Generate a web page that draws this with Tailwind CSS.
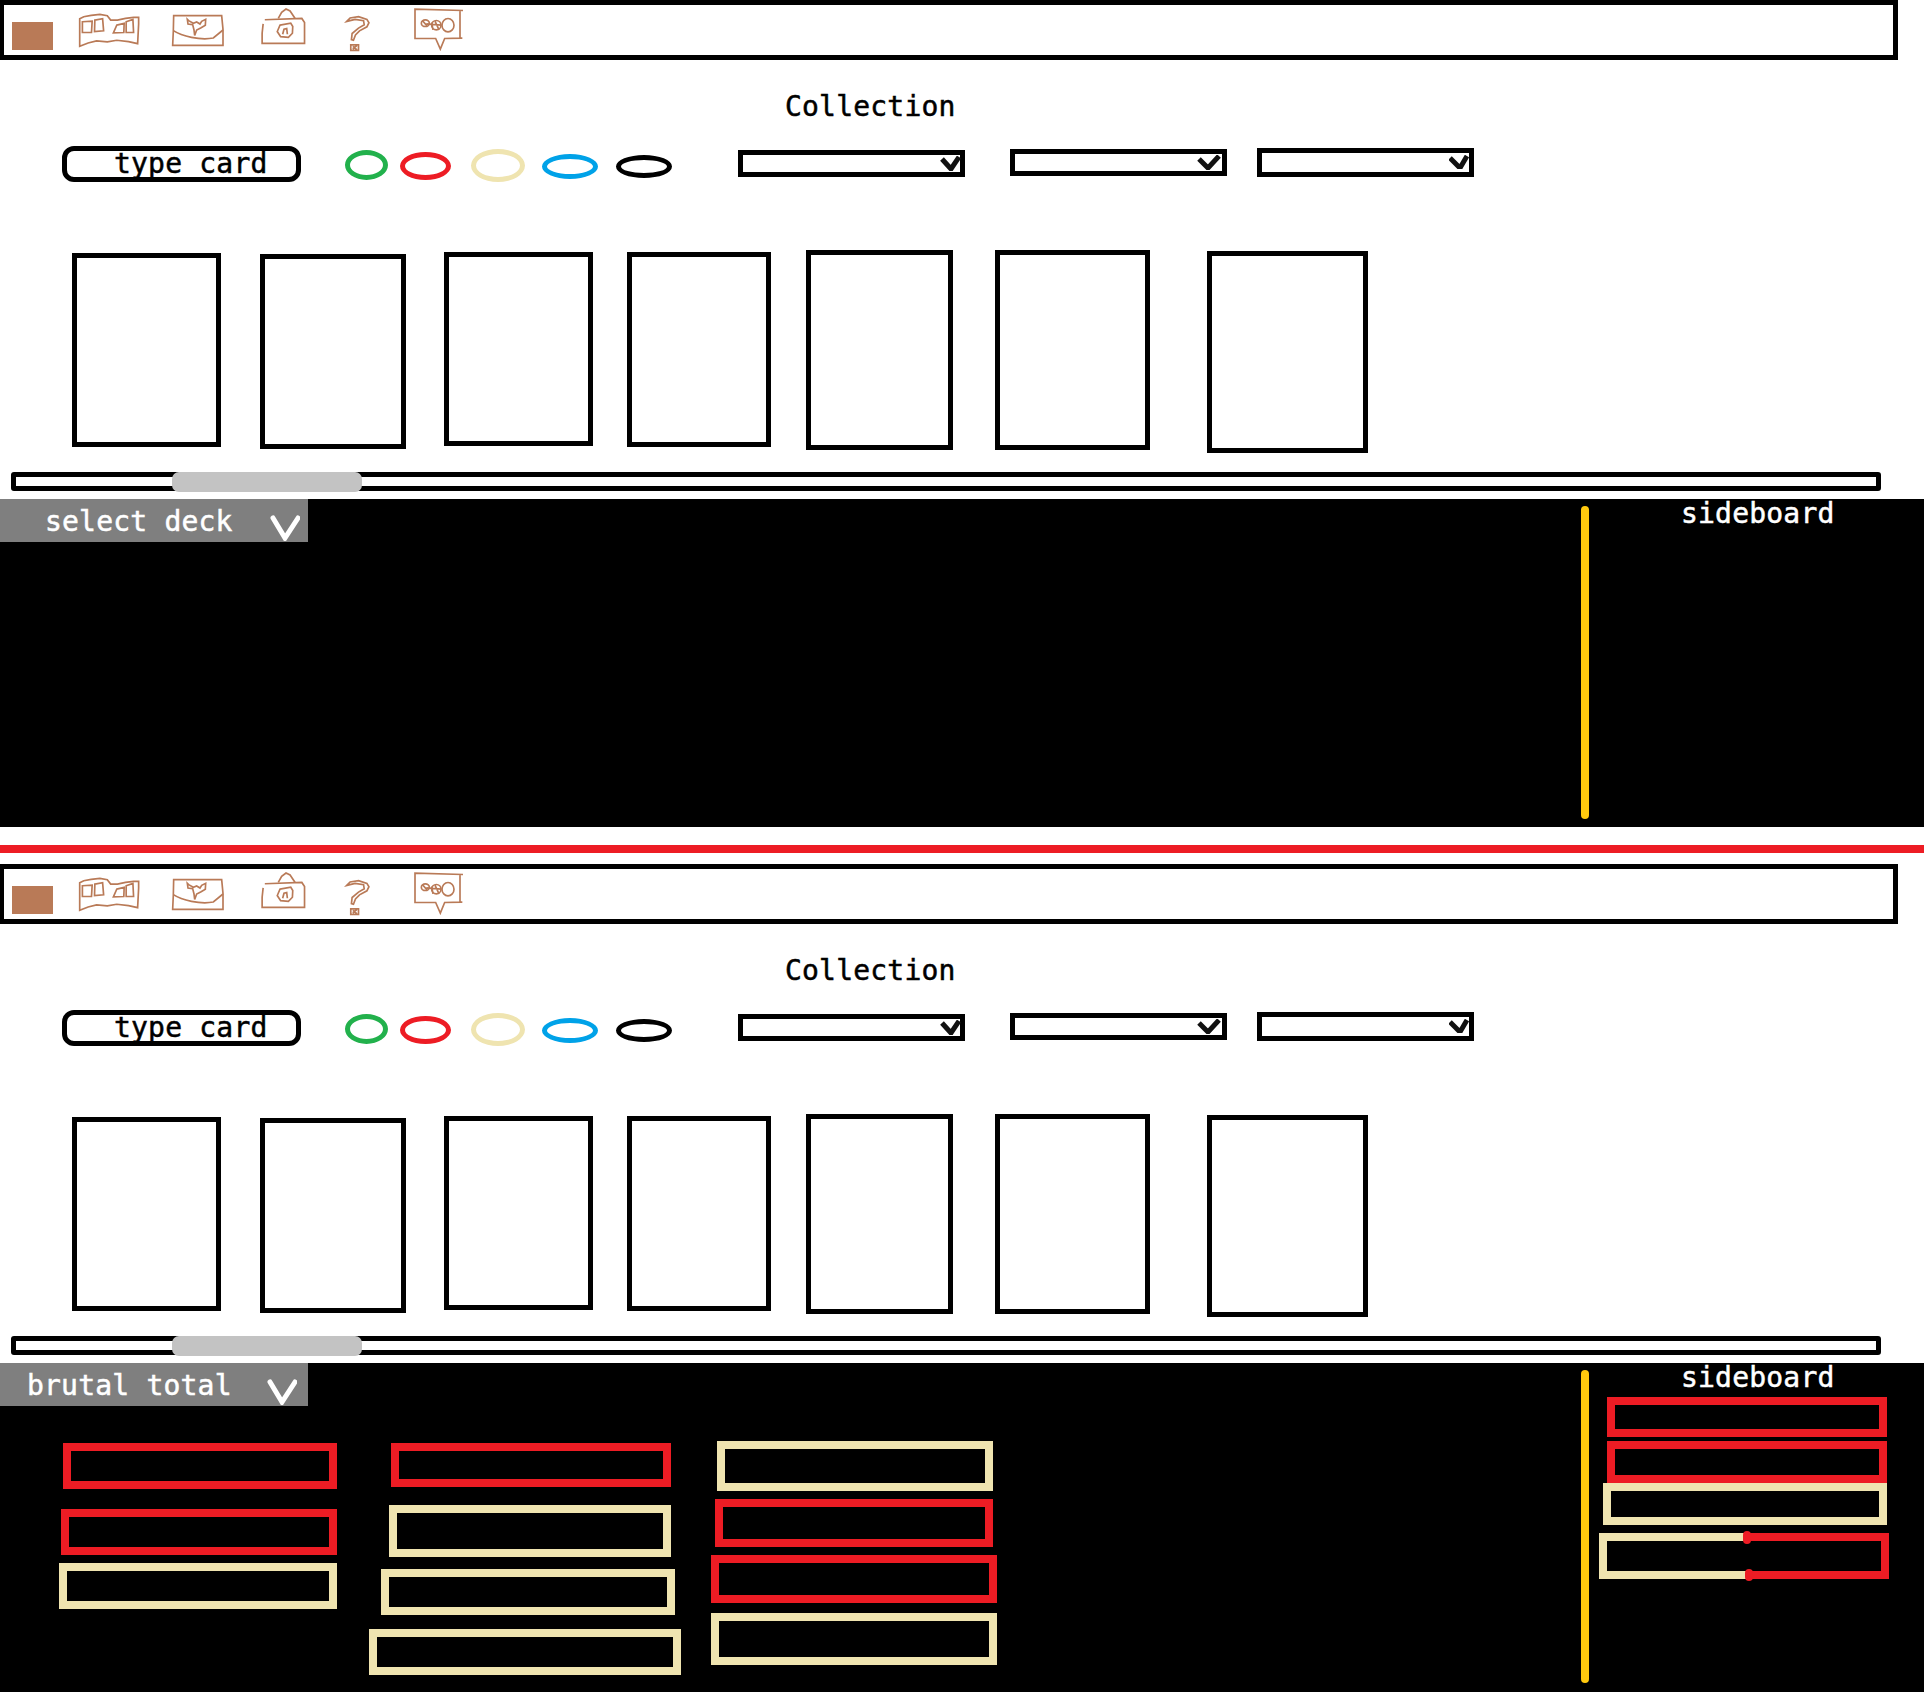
<!DOCTYPE html>
<html lang="en">
<head>
  <meta charset="UTF-8">
  <title>Collection</title>
  <script src="https://cdn.jsdelivr.net/npm/@tailwindcss/browser@4"></script>
</head>
<body class="bg-white text-black font-['DejaVu_Sans_Mono',monospace] text-[28px] tracking-[0.2px] [-webkit-text-stroke:0.5px]">

<!-- top half of a screen: menu, filters, cards, scrollbar -->
<template id="collection">
  <!-- Navigation Bar -->
  <header class="flex items-start w-[1898px] h-[60px] border-black border-t-[5px] border-b-[5px] border-l-4 border-r-[5px]">
    <div class="ml-2 mt-[17px] w-[41px] h-[28px] bg-[#b97a57]"></div>
    <svg class="ml-[26px] mt-[9px] w-[60px] h-[33px] overflow-visible" viewBox="238 42 178 98" fill="none" stroke="#b97a57" stroke-width="5">
      <path d="M240 138V56L252 50L274 46L300 43L322 47L332 60L352 60L376 55L400 52L415 52V72L412 130L385 124L350 120L322 125L290 122L265 128Z"/>
      <path d="M248 65L277 63L275 97H248ZM285 60L308 56L311 92L284 94ZM350 75L372 70L371 97L340 98ZM378 65L398 58L400 97H378Z"/>
    </svg>
    <svg class="ml-[33px] mt-[10px] w-[52px] h-[31px] overflow-visible" viewBox="517 45 154 93" fill="none" stroke="#b97a57" stroke-width="5">
      <path d="M521 47H665L669 88V136H518L520 92Z"/>
      <path d="M520 92C545 108 600 122 640 114L669 90"/>
      <path d="M562 58L564 72L578 74L582 90L584 106L590 90L602 84L616 76L617 58L605 64L600 72L590 66L580 70L566 62Z"/>
    </svg>
    <svg class="ml-[38px] mt-[4px] w-[43px] h-[35px] overflow-visible" viewBox="787 28 127 104" fill="none" stroke="#b97a57" stroke-width="5">
      <path d="M795 60L905 56L913 68V130H787V100L790 72"/>
      <path d="M835 56L845 38L858 28L870 34L885 56"/>
      <path d="M840 76L872 70L878 80L877 100L865 112L842 110L832 95Z"/>
      <path d="M848 103L852 88L860 86L862 103"/>
    </svg>
    <svg class="ml-[41px] mt-[11px] w-[23px] h-[35px] overflow-visible" viewBox="1038 48 68 104" fill="none" stroke="#b97a57" stroke-width="5">
      <path d="M1040 64L1050 54L1075 50L1100 58L1106 68L1100 80L1078 92L1066 104L1060 120L1054 118L1056 100L1075 84L1092 74L1090 62L1065 58Z"/>
      <path d="M1052 134H1075V150H1052ZM1058 146L1070 136M1058 138L1070 148"/>
    </svg>
    <svg class="ml-[46px] mt-[4px] w-[48px] h-[41px] overflow-visible" viewBox="1246 28 144 122" fill="none" stroke="#b97a57" stroke-width="5">
      <path d="M1390 32L1246 28V116H1308L1322 148L1335 116L1388 115H1381V34"/>
      <ellipse cx="1277" cy="70" rx="12" ry="10"/>
      <ellipse cx="1310" cy="76" rx="14" ry="14"/>
      <ellipse cx="1345" cy="76" rx="18" ry="20"/>
      <path d="M1280 72L1325 76M1296 68L1300 90M1306 64L1318 90M1268 62L1282 78"/>
    </svg>
  </header>

  <h2 class="ml-[785px] mt-[30px] h-[35px] leading-[34px] font-normal">Collection</h2>

  <!-- filters -->
  <div class="flex items-start mt-[21px] h-[36px]">
    <div class="ml-[62px] w-[239px] h-[36px] pl-[47px] border-[5px] border-black rounded-[12px] leading-[26px]">type card</div>
    <div class="ml-[44px] mt-1 w-[43px] h-[30px] border-[5px] border-[#22b14c] rounded-[50%]"></div>
    <div class="ml-3 mt-1.5 w-[51px] h-[28px] border-[5px] border-[#ed1c24] rounded-[50%]"></div>
    <div class="ml-5 mt-[3px] w-[54px] h-[33px] border-[5px] border-[#efe4b0] rounded-[50%]"></div>
    <div class="ml-[17px] mt-2 w-[56px] h-[25px] border-[5px] border-[#00a2e8] rounded-[50%]"></div>
    <div class="ml-[18px] mt-[9px] w-[56px] h-[23px] border-[5px] border-black rounded-[50%]"></div>
    <div class="ml-[66px] mt-1 w-[227px] h-[27px] border-[5px] border-black flex justify-end">
      <svg class="mt-[1px] -mr-[1px] w-[21px] h-[15px]" viewBox="0 0 21 15" fill="none" stroke="#111" stroke-width="5"><path d="M2 3L11 13L19 1"/></svg>
    </div>
    <div class="ml-[45px] mt-[3px] w-[217px] h-[27px] border-[5px] border-black flex justify-end">
      <svg class="mt-[1px] mr-[1px] w-[24px] h-[15px]" viewBox="0 0 24 15" fill="none" stroke="#111" stroke-width="5"><path d="M2 4L11 13L22 1"/></svg>
    </div>
    <div class="ml-[30px] mt-[2px] w-[217px] h-[29px] border-[5px] border-black flex justify-end">
      <svg class="mt-[2px] w-[20px] h-[14px]" viewBox="0 0 20 14" fill="none" stroke="#111" stroke-width="5"><path d="M1 3L11 13L18 1"/></svg>
    </div>
  </div>

  <!-- cards -->
  <div class="flex items-start mt-[68px] h-[203px]">
    <div class="ml-[72px] mt-[3px] w-[149px] h-[194px] border-[5px] border-black"></div>
    <div class="ml-[39px] mt-[4px] w-[146px] h-[195px] border-[5px] border-black"></div>
    <div class="ml-[38px] mt-[2px] w-[149px] h-[194px] border-[5px] border-black"></div>
    <div class="ml-[34px] mt-[2px] w-[144px] h-[195px] border-[5px] border-black"></div>
    <div class="ml-[35px] w-[147px] h-[200px] border-[5px] border-black"></div>
    <div class="ml-[42px] w-[155px] h-[200px] border-[5px] border-black"></div>
    <div class="ml-[57px] mt-[1px] w-[161px] h-[202px] border-[5px] border-black"></div>
  </div>

  <!-- scrollbar -->
  <div class="relative ml-[11px] mt-[19px] w-[1870px] h-[19px] border-[5px] border-black rounded-[3px]">
    <div class="absolute left-[156px] -top-[5px] w-[190px] h-[20px] bg-[#c3c3c3] rounded-[7px]"></div>
  </div>
</template>

<div data-collection></div>

<section class="flex mt-2 h-[328px] bg-black text-white">
  <div class="w-[1581px]">
    <div class="flex items-center w-[308px] h-[43px] bg-[#7f7f7f]">
      <span class="ml-[45px] mt-[2px]">select deck</span>
      <svg class="ml-[37px] mt-[15px] w-[30px] h-[26px]" viewBox="0 0 30 26" fill="none" stroke="white" stroke-width="5" stroke-linecap="round"><path d="M3 3L15 23L28 3"/></svg>
    </div>
  </div>
  <div class="mt-[7px] w-2 h-[313px] bg-[#ffc90e] rounded-full"></div>
  <div class="flex-1">
    <h3 class="ml-[92px] pt-1 h-[25px] leading-[22px] font-normal">sideboard</h3>
  </div>
</section>

<!-- Separator -->
<div class="mt-[18px] h-2 bg-[#ed1c24]"></div>

<div class="mt-[11px]" data-collection></div>

<section class="flex mt-2 h-[329px] bg-black text-white">
  <div class="w-[1581px]">
    <div class="flex items-center w-[308px] h-[43px] bg-[#7f7f7f]">
      <span class="ml-[27px] mt-[2px]">brutal total</span>
      <svg class="ml-[35px] mt-[15px] w-[30px] h-[26px]" viewBox="0 0 30 26" fill="none" stroke="white" stroke-width="5" stroke-linecap="round"><path d="M3 3L15 23L28 3"/></svg>
    </div>
    <div class="flex items-start mt-[35px]">
      <div class="ml-[59px] flex flex-col items-end w-[278px]">
        <div class="mt-[2px] w-[274px] h-[46px] border-8 border-[#ed1c24]"></div>
        <div class="mt-5 w-[276px] h-[46px] border-8 border-[#ed1c24]"></div>
        <div class="mt-2 w-[278px] h-[46px] border-8 border-[#efe4b0]"></div>
      </div>
      <div class="ml-8 w-[312px]">
        <div class="ml-[22px] mt-[2px] w-[280px] h-[44px] border-8 border-[#ed1c24]"></div>
        <div class="ml-5 mt-[18px] w-[282px] h-[52px] border-8 border-[#efe4b0]"></div>
        <div class="ml-3 mt-3 w-[294px] h-[46px] border-8 border-[#efe4b0]"></div>
        <div class="mt-[14px] w-[312px] h-[46px] border-8 border-[#efe4b0]"></div>
      </div>
      <div class="ml-[30px] w-[286px]">
        <div class="ml-1.5 w-[276px] h-[50px] border-8 border-[#efe4b0]"></div>
        <div class="ml-1 mt-2 w-[278px] h-[48px] border-8 border-[#ed1c24]"></div>
        <div class="mt-2 w-[286px] h-[48px] border-8 border-[#ed1c24]"></div>
        <div class="mt-2.5 w-[286px] h-[52px] border-8 border-[#efe4b0]"></div>
      </div>
    </div>
  </div>
  <div class="mt-[7px] w-2 h-[313px] bg-[#ffc90e] rounded-full"></div>
  <div class="flex-1">
    <h3 class="ml-[92px] pt-1 h-[25px] leading-[22px] font-normal">sideboard</h3>
    <div class="ml-[18px] mt-[9px] w-[280px] h-[40px] border-8 border-[#ed1c24]"></div>
    <div class="ml-[18px] mt-1 w-[280px] h-[42px] border-8 border-[#ed1c24]"></div>
    <div class="ml-3.5 w-[284px] h-[42px] border-8 border-[#efe4b0]"></div>
    <!-- half and half: double faced card -->
    <div class="relative flex ml-2.5 mt-2 w-[290px] h-[46px]">
      <div class="w-[148px] border-8 border-r-0 border-[#efe4b0]"></div>
      <div class="w-[142px] border-8 border-l-0 border-[#ed1c24]"></div>
      <div class="absolute left-[144px] -top-[2px] w-2 h-[13px] rounded-full bg-[#ed1c24]"></div>
      <div class="absolute left-[146px] top-[36px] w-2 h-3 rounded-full bg-[#ed1c24]"></div>
    </div>
  </div>
</section>

<script>
  // 두 화면에 같은 상단 영역 복사
  const collection = document.getElementById("collection");
  document.querySelectorAll("[data-collection]").forEach(host => {
    host.appendChild(collection.content.cloneNode(true));
  });
</script>
</body>
</html>
